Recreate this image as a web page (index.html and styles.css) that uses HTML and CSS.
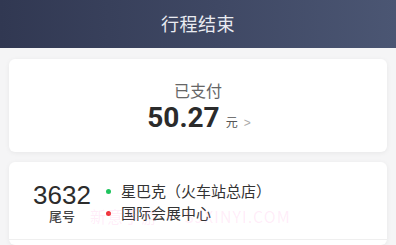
FILE: index.html
```html
<!DOCTYPE html>
<html lang="zh">
<head>
<meta charset="utf-8">
<title>行程结束</title>
<link rel="stylesheet" href="styles.css">
</head>
<body>
<header class="topbar">
  <h1 class="title">行程结束</h1>
</header>
<main class="content">
  <section class="card pay">
    <div class="pay-label">已支付</div>
    <div class="pay-amount">
      <span class="amount">50.27</span>
      <span class="unit">元</span>
      <span class="chev">&gt;</span>
    </div>
  </section>
  <section class="card trip">
    <div class="trip-row">
      <div class="plate">
        <div class="plate-num">3632</div>
        <div class="plate-label">尾号</div>
      </div>
      <ul class="stops">
        <li class="stop"><span class="dot dot-green"></span>星巴克（火车站总店）</li>
        <li class="stop"><span class="dot dot-red"></span>国际会展中心</li>
      </ul>
    </div>
    <div class="trip-more"></div>
    <div class="watermark">新意手游 • SJXINYI.COM</div>
  </section>
</main>
</body>
</html>
```
FILE: styles.css
```css
* { box-sizing: border-box; }
html, body {
  margin: 0;
  padding: 0;
  background: #f5f5f6;
  font-family: "Noto Sans CJK SC", "Noto Sans", sans-serif;
  overflow: hidden;
}
.topbar {
  height: 48px;
  background: linear-gradient(90deg, #313852 0%, #3f4864 55%, #4b5673 100%);
  display: flex;
  align-items: center;
  justify-content: center;
}
.title {
  margin: 0;
  font-size: 18px;
  font-weight: 400;
  color: #e9ebf1;
  letter-spacing: 0.5px;
  line-height: 24px;
  padding-bottom: 2px;
}
.content {
  padding: 11px 9px 0 9px;
  display: flex;
  flex-direction: column;
  gap: 10px;
}
.card {
  background: #fff;
  border-radius: 6px;
  box-shadow: 0 1px 5px rgba(0, 0, 0, 0.06);
}
.pay {
  height: 93px;
  display: flex;
  flex-direction: column;
  align-items: center;
  padding-top: 20px;
}
.pay-label {
  font-size: 16px;
  line-height: 22px;
  color: #666;
}
.pay-amount {
  display: flex;
  align-items: baseline;
  padding-left: 2px;
}
.amount {
  font-family: "Roboto", "Liberation Sans", sans-serif;
  font-weight: 700;
  font-size: 28px;
  line-height: 34px;
  color: #2b2b2b;
}
.unit {
  font-size: 12px;
  color: #555;
  margin-left: 6px;
}
.chev {
  font-family: "Liberation Sans", sans-serif;
  font-size: 12px;
  color: #aaa;
  margin-left: 6px;
}
.trip {
  position: relative;
}
.trip-row {
  display: flex;
  align-items: flex-start;
  padding: 19px 0 15px 22px;
  border-bottom: 1px solid #efefef;
}
.plate {
  display: flex;
  flex-direction: column;
  align-items: center;
  width: 62px;
}
.plate-num {
  font-family: "Liberation Sans", "Roboto", sans-serif;
  font-size: 26px;
  line-height: 28px;
  color: #2c2c2c;
}
.plate-label {
  font-size: 13px;
  line-height: 14px;
  font-weight: 500;
  color: #444;
}
.stops {
  list-style: none;
  margin: -1px 0 0 13px;
  padding: 0;
}
.stop {
  display: flex;
  align-items: center;
  font-size: 15px;
  line-height: 22px;
  color: #333;
}
.dot {
  width: 5px;
  height: 5px;
  border-radius: 50%;
  margin-right: 10px;
  flex: none;
}
.dot-green { background: #1fc45e; }
.dot-red { background: #f0333a; }
.trip-more { height: 5px; }
.watermark {
  position: absolute;
  left: 81px;
  top: 44px;
  font-size: 16px;
  line-height: 20px;
  color: rgba(255, 140, 215, 0.16);
  letter-spacing: 1px;
  pointer-events: none;
}
```
